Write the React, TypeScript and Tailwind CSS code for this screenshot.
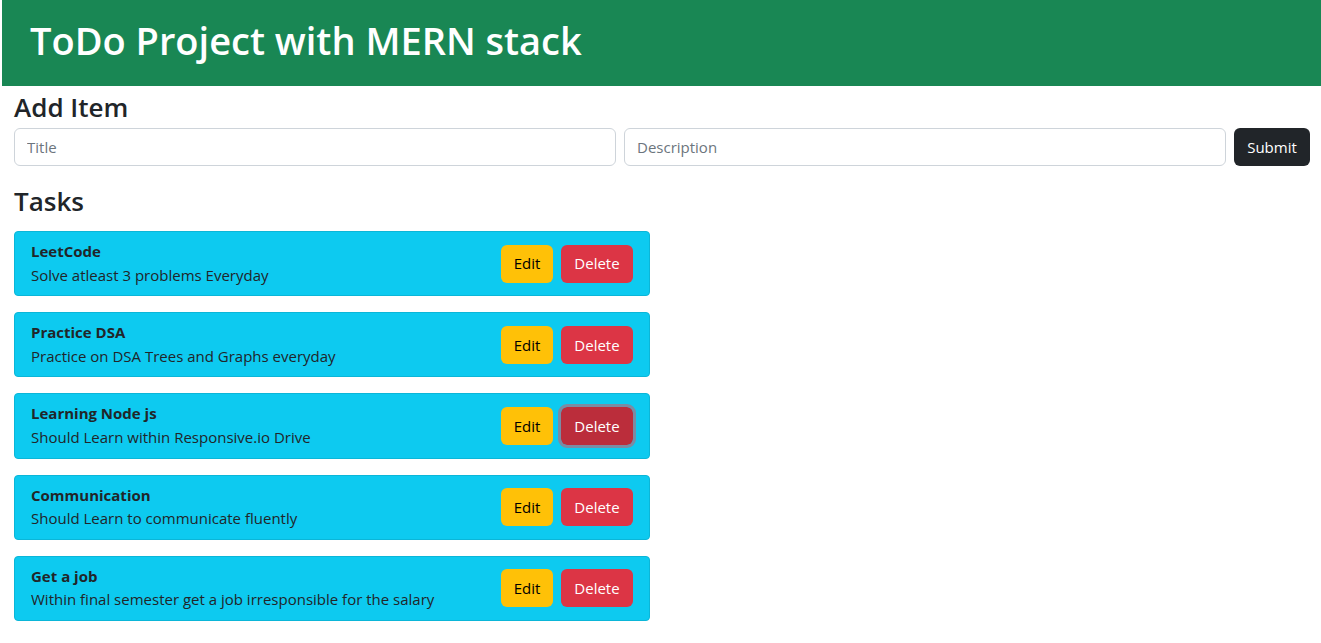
const tasks = [
  { title: "LeetCode", description: "Solve atleast 3 problems Everyday" },
  { title: "Practice DSA", description: "Practice on DSA Trees and Graphs everyday" },
  { title: "Learning Node js", description: "Should Learn within Responsive.io Drive", focused: true },
  { title: "Communication", description: "Should Learn to communicate fluently" },
  { title: "Get a job", description: "Within final semester get a job irresponsible for the salary" },
];

const TaskCard = ({ title, description, focused }: { title: string; description: string; focused?: boolean }) => (
  <div className="flex items-center justify-between rounded border border-[#0bb6d8] bg-[#0dcaf0] px-4 py-2 text-[#212529]">
    <div className="flex flex-col">
      <span className="text-[15px] leading-[23.6px] font-bold">{title}</span>
      <span className="text-[15px] leading-[23.6px]">{description}</span>
    </div>
    <div className="flex gap-2">
      <button className="h-[38px] w-[52px] rounded-md bg-[#ffc107] text-[15px] text-black">Edit</button>
      <button
        className={
          focused
            ? "h-[38px] w-[72px] rounded-md bg-[#bb2d3b] text-[15px] text-white outline-[3px] outline-[#7b8ba3] outline-solid"
            : "h-[38px] w-[72px] rounded-md bg-[#dc3545] text-[15px] text-white"
        }
      >
        Delete
      </button>
    </div>
  </div>
);

export default function App() {
  return (
    <div className="min-h-[643px] bg-white pl-[2px] font-['Open_Sans',sans-serif] text-[#212529]">
      <header className="flex h-[86px] items-center bg-[#198754] pb-[6px] pl-[28px]">
        <h1 className="text-[38px] font-semibold text-white">ToDo Project with MERN stack</h1>
      </header>
      <main className="pl-[12px] pr-[11px]">
        <h3 className="mt-[3px] text-[26px] leading-9 font-semibold">Add Item</h3>
        <form className="mt-[3px] flex gap-2">
          <input
            placeholder="Title"
            className="h-[38px] flex-1 rounded-md border border-[#ced4da] px-3 text-[15px] placeholder:text-[#6c757d]"
          />
          <input
            placeholder="Description"
            className="h-[38px] flex-1 rounded-md border border-[#ced4da] px-3 text-[15px] placeholder:text-[#6c757d]"
          />
          <button type="submit" className="h-[38px] w-[76px] rounded-md bg-[#212529] text-[15px] text-white">
            Submit
          </button>
        </form>
        <h3 className="mt-[17px] text-[26px] leading-9 font-semibold">Tasks</h3>
        <div className="mt-[12px] flex w-[636px] flex-col gap-4">
          {tasks.map((t) => (
            <TaskCard key={t.title} {...t} />
          ))}
        </div>
      </main>
    </div>
  );
}
